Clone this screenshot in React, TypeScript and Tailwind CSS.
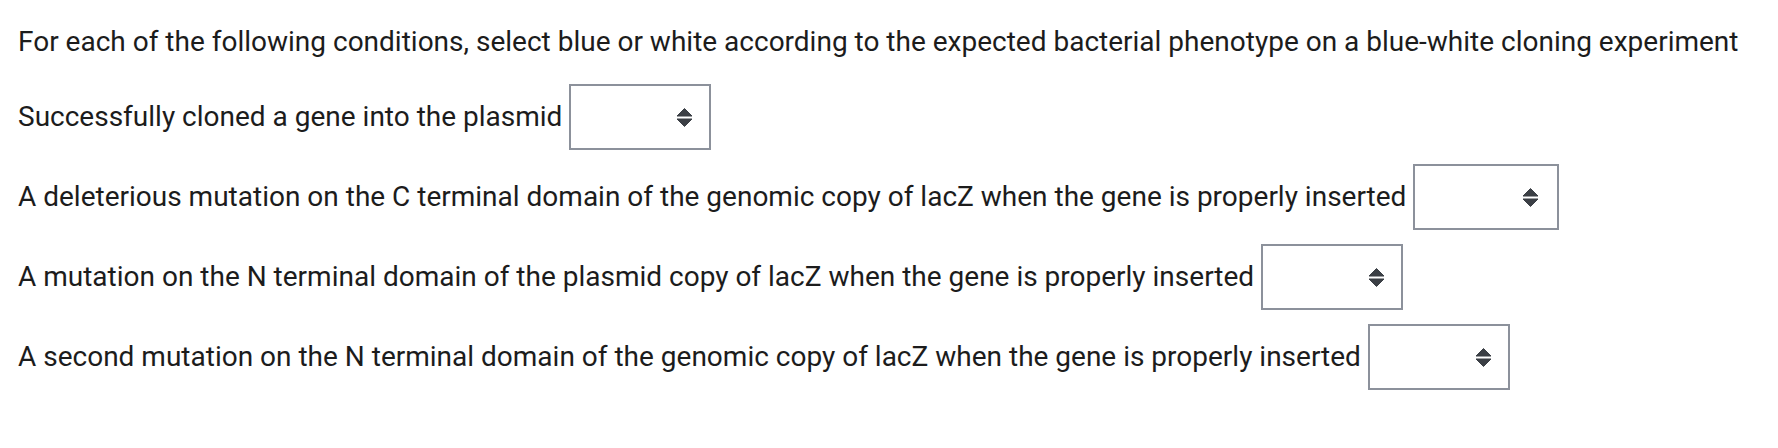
import React from "react";

function SortIcon() {
  return (
    <svg width="17" height="19" viewBox="0 0 17 19" aria-hidden="true">
      <path d="M1 8 L8.5 0.5 L16 8 Z" fill="#3b3f45" stroke="#3b3f45" strokeWidth="1" strokeLinejoin="round" />
      <path d="M1 11 L16 11 L8.5 18.5 Z" fill="#3b3f45" stroke="#3b3f45" strokeWidth="1" strokeLinejoin="round" />
    </svg>
  );
}

function SelectBox({ wide }: { wide?: boolean }) {
  return (
    <div
      className={
        (wide ? "w-[146px] pr-[18px] " : "w-[142px] pr-[16px] ") +
        "h-[66px] border-2 border-[#8c919b] bg-white flex items-center justify-end shrink-0"
      }
    >
      <SortIcon />
    </div>
  );
}

const rows = [
  { t: "Successfully cloned a gene into the plasmid", wide: false },
  { t: "A deleterious mutation on the C terminal domain of the genomic copy of lacZ when the gene is properly inserted", wide: true },
  { t: "A mutation on the N terminal domain of the plasmid copy of lacZ when the gene is properly inserted", wide: false },
  { t: "A second mutation on the N terminal domain of the genomic copy of lacZ when the gene is properly inserted", wide: false },
];

export default function App() {
  return (
    <div
      className="w-[1778px] h-[448px] bg-white text-[#1c1c1c] pl-[18px] pt-[25px]"
      style={{ fontFamily: "Roboto, 'Liberation Sans', sans-serif" }}
    >
      <p className="text-[28px] leading-[34px] whitespace-nowrap">
        For each of the following conditions, select blue or white according to the expected bacterial phenotype on a blue-white cloning experiment
      </p>
      <div className="mt-[25px] flex flex-col gap-[14px]">
        {rows.map((r) => (
          <div key={r.t} className="flex items-center gap-[7px] h-[66px]">
            <span className="text-[28px] leading-[34px] whitespace-nowrap">{r.t}</span>
            <SelectBox wide={r.wide} />
          </div>
        ))}
      </div>
    </div>
  );
}
